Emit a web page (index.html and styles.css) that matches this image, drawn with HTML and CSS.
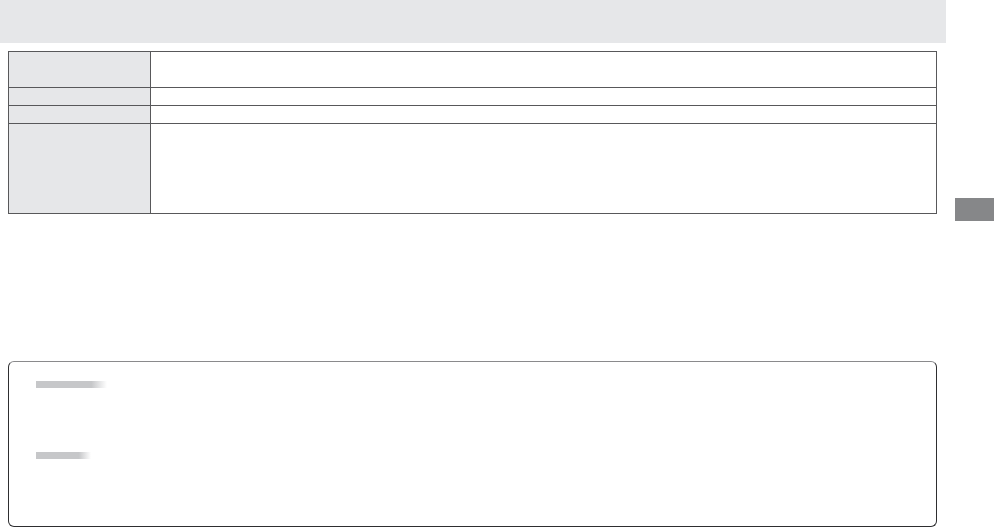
FILE: index.html
```html
<!DOCTYPE html>
<html>
<head>
<meta charset="utf-8">
<link rel="stylesheet" href="styles.css">
</head>
<body>
<div class="page">
  <div class="main">
    <div class="header"></div>
    <div class="spec">
      <div class="label r1"></div><div class="value r1"></div>
      <div class="label r2"></div><div class="value r2"></div>
      <div class="label r3"></div><div class="value r3"></div>
      <div class="label r4"></div><div class="value r4"></div>
    </div>
    <div class="note">
      <div class="bar bar1"></div>
      <div class="bar bar2"></div>
    </div>
  </div>
  <div class="side">
    <div class="tab"></div>
  </div>
</div>
</body>
</html>
```
FILE: styles.css
```css
html, body {
  margin: 0;
  padding: 0;
  background: #ffffff;
  font-family: "Liberation Sans", Arial, sans-serif;
}
.page {
  display: flex;
  width: 994px;
  height: 528px;
  overflow: hidden;
}
.main {
  width: 946px;
  flex: none;
}
.header {
  height: 43px;
  background: #e6e7e9;
}
.spec {
  margin: 8px 0 0 8px;
  width: 929px;
  box-sizing: border-box;
  border: 1px solid #58585a;
  display: grid;
  grid-template-columns: 142px 1fr;
}
.label {
  background: #e6e7e9;
  border-right: 1px solid #58585a;
  box-sizing: border-box;
}
.r1, .r2, .r3 {
  border-bottom: 1px solid #58585a;
  box-sizing: border-box;
}
.r1 { height: 36px; }
.r2, .r3 { height: 18px; }
.r4 { height: 89px; }
.note {
  margin: 147px 0 0 8px;
  width: 929px;
  height: 166px;
  box-sizing: border-box;
  border: 1px solid #2e2e30;
  border-top-color: #8a8a8c;
  border-radius: 6px;
  padding: 19px 0 0 27px;
}
.bar {
  height: 7px;
  background: linear-gradient(to right, #c6c7c9 0%, #c6c7c9 78%, #ffffff 100%);
}
.bar1 { width: 71px; }
.bar2 { width: 55px; margin-top: 64px; }
.side {
  flex: 1;
  padding: 198px 0 0 9px;
}
.tab {
  width: 39px;
  height: 23px;
  background: #868789;
}
```
